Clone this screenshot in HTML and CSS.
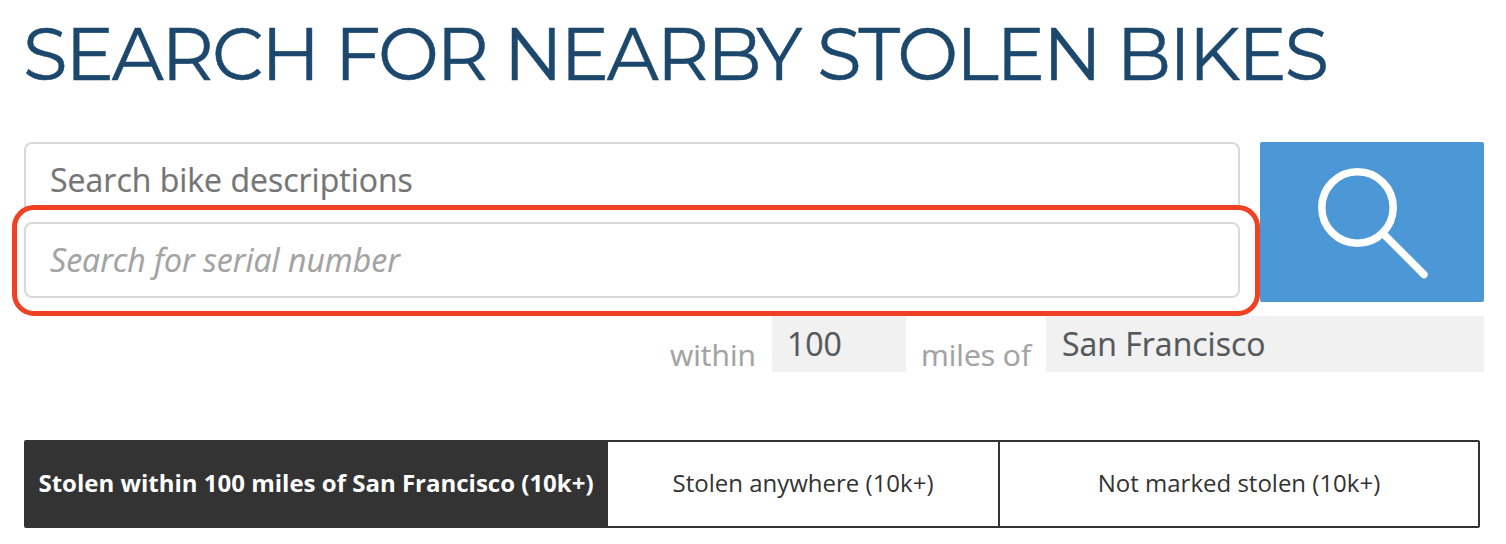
FILE: index.html
```
<!DOCTYPE html>
<html lang="en">
<head>
<meta charset="utf-8">
<title>Search for nearby stolen bikes</title>
<link rel="stylesheet" href="styles.css">
</head>
<body>
<main class="page">
  <h1 class="title">SEARCH FOR NEARBY STOLEN BIKES</h1>
  <form class="search">
    <div class="fields">
      <div class="field field-query">Search bike descriptions</div>
      <div class="field field-serial">Search for serial number<div class="highlight"></div></div>
    </div>
    <button class="submit" type="button" aria-label="Search">
      <svg class="glass" viewBox="0 0 224 160"><circle cx="97.500" cy="65.500" r="35.700"/><path d="M123 91.500L164 132.500"/></svg>
    </button>
  </form>
  <div class="proximity">
    <span class="label label-within">within</span>
    <div class="box box-distance">100</div>
    <span class="label label-miles">miles of</span>
    <div class="box box-place">San Francisco</div>
  </div>
  <nav class="tabs">
    <a class="tab tab-active">Stolen within 100 miles of San Francisco (10k+)</a>
    <a class="tab tab-anywhere">Stolen anywhere (10k+)</a>
    <a class="tab tab-unmarked">Not marked stolen (10k+)</a>
  </nav>
</main>
</body>
</html>
```
FILE: styles.css
```
* { box-sizing: border-box; }
body { margin: 0; background: #fff; font-family: "Open Sans", "Noto Sans", sans-serif; }
.page { width: 1506px; height: 544px; padding: 0 22px 0 24px; overflow: hidden; }
.title { margin: 0 0 0 -1px; height: 142px; padding-top: 9px; font-family: Montserrat, "Open Sans", sans-serif; font-size: 72.5px; line-height: 90px; font-weight: 400; letter-spacing: -2.15px; color: #1d486d; white-space: nowrap; -webkit-text-stroke: 0.5px #1d486d; }
.search { display: flex; gap: 20px; height: 160px; }
.fields { width: 1216px; }
.field { display: flex; align-items: center; padding-left: 24px; border: 2px solid #d9d9d9; border-radius: 8px; font-size: 32px; line-height: 44px; white-space: nowrap; }
.field-query { align-items: flex-start; height: 66px; margin-bottom: 14px; padding-top: 14px; border-bottom: 0; border-radius: 8px 8px 0 0; color: #757575; -webkit-text-stroke: 0.2px #757575; }
.field-serial { position: relative; height: 76px; color: #a3a3a3; font-style: italic; -webkit-text-stroke: 0.2px #a3a3a3; }
.highlight { position: absolute; left: -14.5px; top: -19.4px; width: 1248.5px; height: 111px; border: 5px solid #f04124; border-radius: 22px; }
.submit { width: 224px; height: 160px; padding: 0; border: 0; border-radius: 2px; background: #4c97d5; }
.glass { display: block; width: 224px; height: 160px; fill: none; stroke: #fff; stroke-width: 7.5; stroke-linecap: round; }
.proximity { display: flex; justify-content: flex-end; height: 56px; margin-top: 14px; font-size: 32px; }
.label { padding-top: 17px; line-height: 44px; color: #a3a3a3; font-size: 30px; white-space: nowrap; -webkit-text-stroke: 0.2px #a3a3a3; }
.label-within { width: 102px; }
.label-miles { width: 125px; }
.box { height: 56px; padding-left: 16px; border-radius: 2px; background: #f1f1f1; color: #55595c; line-height: 56px; white-space: nowrap; -webkit-text-stroke: 0.2px #55595c; }
.box-distance { width: 134px; margin-right: 15px; padding-left: 15px; }
.box-place { width: 438px; }
.tabs { display: flex; width: 1456px; height: 88px; margin-top: 68px; border: 2px solid #333; border-radius: 2px; font-size: 24px; color: #333; }
.tab { display: flex; align-items: center; justify-content: center; padding-bottom: 4px; white-space: nowrap; }
.tab-active { width: 582px; padding-right: 2px; background: #333; color: #fff; font-weight: 700; }
.tab-anywhere { width: 392px; border-right: 2px solid #333; }
.tab-unmarked { width: 478px; }
```
